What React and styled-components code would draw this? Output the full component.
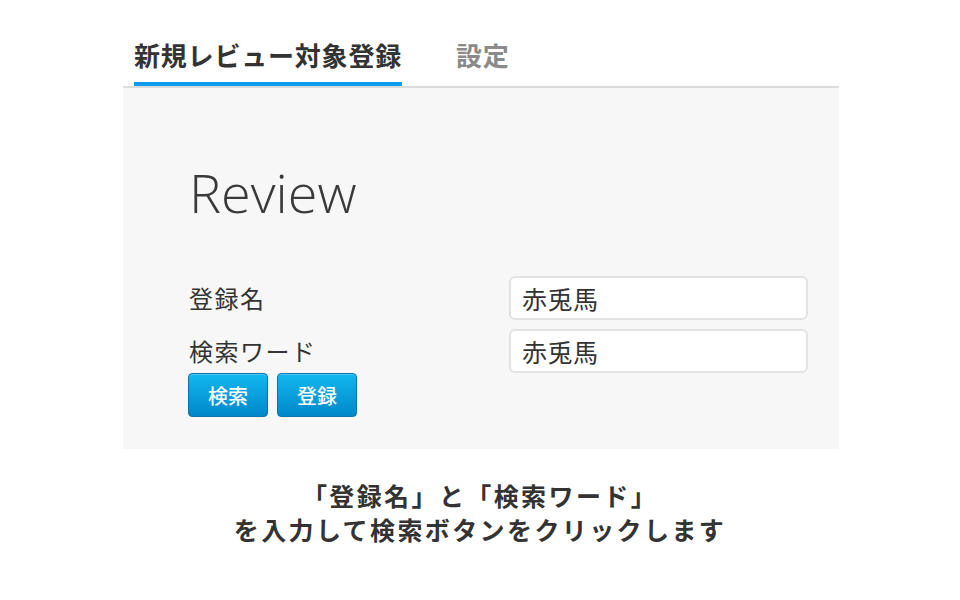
import React from "react";
import styled, { createGlobalStyle } from "styled-components";

const Global = createGlobalStyle`
  html, body { margin: 0; padding: 0; background: #ffffff; }
  body { font-family: "Noto Sans CJK JP", "Noto Sans", sans-serif; color: #333; }
  * { box-sizing: border-box; }
`;

const Page = styled.div`
  width: 960px;
  height: 600px;
  display: flex;
  flex-direction: column;
`;

const Card = styled.div`
  margin-left: 123px;
  width: 716px;
`;

const TabBar = styled.div`
  display: flex;
  gap: 54px;
  padding-left: 11px;
  border-bottom: 2px solid #dcdcdc;
`;

const Tab = styled.div`
  font-family: "Noto Sans CJK JP", sans-serif;
  font-size: 26px;
  font-weight: 700;
  letter-spacing: 0.8px;
  line-height: 36px;
  padding-top: 37px;
  padding-bottom: 9px;
  color: ${(p) => (p.$active ? "#333333" : "#8a8a8a")};
  border-bottom: 4px solid ${(p) => (p.$active ? "#0e9cf0" : "transparent")};
`;

const Panel = styled.div`
  background: #f7f7f7;
  padding: 72px 31px 32px 66px;
`;

const Heading = styled.h1`
  margin: 0 0 52px 0;
  font-family: "Open Sans", sans-serif;
  font-weight: 300;
  font-size: 54px;
  line-height: 64px;
  color: #3a3a3a;
`;

const Form = styled.div`
  display: grid;
  grid-template-columns: 320px 299px;
  row-gap: 9px;
  align-items: center;
`;

const Label = styled.div`
  font-size: 24px;
  letter-spacing: 1.5px;
  color: #333;
  line-height: 32px;
`;

const Input = styled.div`
  height: 44px;
  background: #fff;
  border: 2px solid #e2e2e2;
  border-radius: 6px;
  padding-left: 11px;
  display: flex;
  align-items: center;
  font-size: 25px;
  color: #333;
  letter-spacing: 0.5px;
`;

const Buttons = styled.div`
  display: flex;
  gap: 9px;
  margin-left: -1px;
`;

const Button = styled.button`
  width: 80px;
  height: 44px;
  border: 1px solid #0b74ab;
  border-radius: 4px;
  background: linear-gradient(#12b8f0, #0087c9);
  color: #fff;
  font-family: "Noto Sans CJK JP", sans-serif;
  font-size: 20px;
  font-weight: 500;
  padding: 0;
  box-shadow: inset 0 1px 0 rgba(255,255,255,0.25);
`;

const Caption = styled.div`
  margin-top: 29px;
  display: flex;
  flex-direction: column;
  align-items: center;
`;

const CaptionLine = styled.div`
  font-size: 25px;
  font-weight: 700;
  letter-spacing: 2.4px;
  line-height: 34px;
  height: 34px;
  color: #333;
  white-space: nowrap;
`;

export default function App() {
  return (
    <Page>
      <Global />
      <Card>
        <TabBar>
          <Tab $active>新規レビュー対象登録</Tab>
          <Tab>設定</Tab>
        </TabBar>
        <Panel>
          <Heading>Review</Heading>
          <Form>
            <Label>登録名</Label>
            <Input>赤兎馬</Input>
            <Label>検索ワード</Label>
            <Input>赤兎馬</Input>
          </Form>
          <Buttons>
            <Button>検索</Button>
            <Button>登録</Button>
          </Buttons>
        </Panel>
      </Card>
      <Caption>
        <CaptionLine>「登録名」と「検索ワード」</CaptionLine>
        <CaptionLine>を入力して検索ボタンをクリックします</CaptionLine>
      </Caption>
    </Page>
  );
}
